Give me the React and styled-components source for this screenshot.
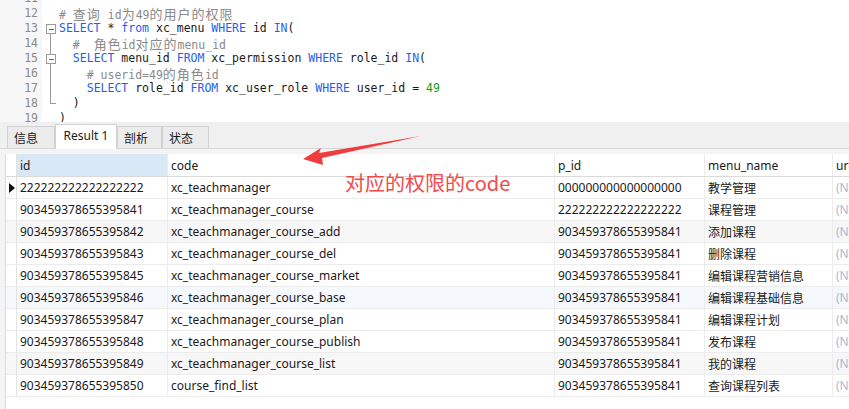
import React from 'react';
import styled, { createGlobalStyle } from 'styled-components';

const GlobalStyle = createGlobalStyle`
  body {
    margin: 0;
    background: #ffffff;
    font-family: "Noto Sans", "Noto Sans CJK SC", sans-serif;
  }
`;

const Page = styled.div`
  width: 849px;
  height: 409px;
  overflow: hidden;
  position: relative;
  background: #ffffff;
`;

const Editor = styled.div`
  height: 122px;
  overflow: hidden;
  display: flex;
  background: #ffffff;
`;

const Gutter = styled.div`
  width: 42px;
  background: #f7f7f7;
  margin-top: -9px;
`;

const LineNo = styled.div`
  height: 15px;
  line-height: 15px;
  text-align: right;
  padding-right: 4px;
  font-family: "DejaVu Sans Mono", "Liberation Mono", monospace;
  font-size: 11.5px;
  color: #8a8a8a;
`;

const FoldCol = styled.div`
  width: 17px;
  margin-top: -9px;
`;

const FoldCell = styled.div`
  height: 15px;
  position: relative;
`;

const FoldBox = styled.div`
  position: absolute;
  left: 4px;
  top: 3px;
  width: 8px;
  height: 8px;
  border: 1px solid #9a9a9a;
  background: #fff;
  &::after {
    content: '';
    position: absolute;
    left: 2px;
    top: 4px;
    width: 5px;
    height: 1px;
    background: #666;
  }
`;

const FoldLine = styled.div`
  position: absolute;
  left: 8px;
  top: ${({ $top }) => $top}px;
  bottom: ${({ $bottom }) => $bottom}px;
  width: 1px;
  background: #9a9a9a;
`;

const FoldEnd = styled.div`
  position: absolute;
  left: 8px;
  top: 7px;
  width: 6px;
  height: 1px;
  background: #9a9a9a;
`;

const Code = styled.div`
  flex: 1;
  margin-top: -9px;
`;

const CodeLine = styled.div`
  height: 15px;
  line-height: 15px;
  white-space: pre;
  font-family: "DejaVu Sans Mono", "Liberation Mono", "Noto Sans CJK SC", monospace;
  font-size: 11.5px;
  color: #1a1a1a;
`;

const Kw = styled.span`
  color: #1f5ef0;
`;

const Cm = styled.span`
  color: #8a8a8a;
`;

// CJK glyphs take two columns in the editor
const Wide = styled.span`
  font-family: "Noto Sans CJK SC", sans-serif;
  font-size: 13px;
  letter-spacing: 1px;
  line-height: 15px;
`;

const Num = styled.span`
  color: #11a011;
`;

const TabBar = styled.div`
  height: 26px;
  background: #f0f0f0;
  display: flex;
  align-items: flex-end;
  padding-left: 7px;
  border-bottom: 1px solid #d6d6d6;
`;

const Tab = styled.div`
  height: ${({ $active }) => ($active ? 25 : 22)}px;
  width: ${({ $w }) => $w}px;
  padding: 0 6px;
  box-sizing: border-box;
  display: flex;
  align-items: center;
  justify-content: ${({ $active }) => ($active ? 'center' : 'flex-start')};
  white-space: nowrap;
  font-size: 12px;
  color: #1a1a1a;
  background: ${({ $active }) => ($active ? '#ffffff' : '#ececec')};
  border: 1px solid #d2d2d2;
  border-bottom: none;
  margin-bottom: ${({ $active }) => ($active ? -1 : 0)}px;
  ${({ $active }) => ($active ? 'padding-bottom: 4px;' : '')}
`;

const ResultArea = styled.div`
  padding: 5px 0 0 5px;
  background: #f4f4f4;
  height: 260px;
`;

const Grid = styled.div`
  background: #ffffff;
  height: 100%;
  border-left: 1px solid #dcdcdc;
`;

const Row = styled.div`
  display: grid;
  grid-template-columns: 11px 151px 387px 150px 128px 200px;
  height: ${({ $header }) => ($header ? 23 : 22)}px;
  background: ${({ $bg }) => $bg || '#ffffff'};
  border-bottom: 1px solid ${({ $header }) => ($header ? '#dadada' : '#ececec')};
  box-sizing: border-box;
`;

const Cell = styled.div`
  padding-left: 3px;
  display: flex;
  align-items: center;
  font-size: 12px;
  white-space: nowrap;
  overflow: hidden;
  color: ${({ $null }) => ($null ? '#aeb8cf' : '#1a1a1a')};
  background: ${({ $sel }) => ($sel ? '#d9e8f7' : 'transparent')};
  border-right: 1px solid #ececec;
`;

const Indicator = styled.div`
  border-right: 1px solid #e2e2e2;
  display: flex;
  align-items: center;
  justify-content: center;
`;

const Pointer = styled.div`
  width: 0;
  height: 0;
  border-top: 5px solid transparent;
  border-bottom: 5px solid transparent;
  border-left: 6px solid #111;
  margin-left: 1px;
`;

const Arrow = styled.svg`
  position: absolute;
  left: 0;
  top: 0;
  pointer-events: none;
`;

const Note = styled.div`
  position: absolute;
  left: 345px;
  top: 169px;
  font-size: 20px;
  line-height: 28px;
  color: #f04a4a;
  font-family: "Noto Sans CJK SC", "Noto Sans", sans-serif;
`;

const rows = [
  ['222222222222222222', 'xc_teachmanager', '000000000000000000', '教学管理'],
  ['903459378655395841', 'xc_teachmanager_course', '222222222222222222', '课程管理'],
  ['903459378655395842', 'xc_teachmanager_course_add', '903459378655395841', '添加课程'],
  ['903459378655395843', 'xc_teachmanager_course_del', '903459378655395841', '删除课程'],
  ['903459378655395845', 'xc_teachmanager_course_market', '903459378655395841', '编辑课程营销信息'],
  ['903459378655395846', 'xc_teachmanager_course_base', '903459378655395841', '编辑课程基础信息'],
  ['903459378655395847', 'xc_teachmanager_course_plan', '903459378655395841', '编辑课程计划'],
  ['903459378655395848', 'xc_teachmanager_course_publish', '903459378655395841', '发布课程'],
  ['903459378655395849', 'xc_teachmanager_course_list', '903459378655395841', '我的课程'],
  ['903459378655395850', 'course_find_list', '903459378655395841', '查询课程列表'],
];

const rowBg = (i) => {
  if (i === 2 || i === 8) return '#f7f7f7';
  if (i === 5) return '#f5f9fd';
  return '#ffffff';
};

const App = () => {
  const lineNos = [11, 12, 13, 14, 15, 16, 17, 18, 19];
  return (
    <Page>
      <GlobalStyle />
      <Editor>
        <Gutter>
          {lineNos.map((n) => (
            <LineNo key={n}>{n}</LineNo>
          ))}
        </Gutter>
        <FoldCol>
          <FoldCell />
          <FoldCell />
          <FoldCell>
            <FoldBox />
            <FoldLine $top={13} $bottom={-1} />
          </FoldCell>
          <FoldCell>
            <FoldLine $top={0} $bottom={0} />
          </FoldCell>
          <FoldCell>
            <FoldLine $top={0} $bottom={0} />
            <FoldBox />
          </FoldCell>
          <FoldCell>
            <FoldLine $top={0} $bottom={0} />
          </FoldCell>
          <FoldCell>
            <FoldLine $top={0} $bottom={0} />
          </FoldCell>
          <FoldCell>
            <FoldLine $top={0} $bottom={8} />
            <FoldEnd />
          </FoldCell>
        </FoldCol>
        <Code>
          <CodeLine> </CodeLine>
          <CodeLine>
            <Cm>
              # <Wide>查询</Wide> id<Wide>为</Wide>49<Wide>的用户的权限</Wide>
            </Cm>
          </CodeLine>
          <CodeLine>
            <Kw>SELECT</Kw> * <Kw>from</Kw> xc_menu <Kw>WHERE</Kw> id <Kw>IN</Kw>(
          </CodeLine>
          <CodeLine>
            <Cm>
              {'  #  '}
              <Wide>角色</Wide>id<Wide>对应的</Wide>menu_id
            </Cm>
          </CodeLine>
          <CodeLine>
            {'  '}
            <Kw>SELECT</Kw> menu_id <Kw>FROM</Kw> xc_permission <Kw>WHERE</Kw> role_id <Kw>IN</Kw>(
          </CodeLine>
          <CodeLine>
            <Cm>
              {'    # userid=49'}
              <Wide>的角色</Wide>id
            </Cm>
          </CodeLine>
          <CodeLine>
            {'    '}
            <Kw>SELECT</Kw> role_id <Kw>FROM</Kw> xc_user_role <Kw>WHERE</Kw> user_id = <Num>49</Num>
          </CodeLine>
          <CodeLine>{'  )'}</CodeLine>
          <CodeLine>)</CodeLine>
        </Code>
      </Editor>
      <TabBar>
        <Tab $w={48}>信息</Tab>
        <Tab $w={62} $active>Result 1</Tab>
        <Tab $w={45}>剖析</Tab>
        <Tab $w={47}>状态</Tab>
      </TabBar>
      <ResultArea>
        <Grid>
          <Row $header>
            <Indicator />
            <Cell $sel>id</Cell>
            <Cell>code</Cell>
            <Cell>p_id</Cell>
            <Cell>menu_name</Cell>
            <Cell>url</Cell>
          </Row>
          {rows.map((r, i) => (
            <Row key={r[0]} $bg={rowBg(i)}>
              <Indicator>{i === 0 && <Pointer />}</Indicator>
              <Cell>{r[0]}</Cell>
              <Cell>{r[1]}</Cell>
              <Cell>{r[2]}</Cell>
              <Cell>{r[3]}</Cell>
              <Cell $null>(Null)</Cell>
            </Row>
          ))}
        </Grid>
      </ResultArea>
      <Arrow width="849" height="409">
        <polygon points="303,159 321,148 319,153 421,136 322,158 323,165" fill="#f03c3c" />
      </Arrow>
      <Note>对应的权限的code</Note>
    </Page>
  );
};

export default App;
